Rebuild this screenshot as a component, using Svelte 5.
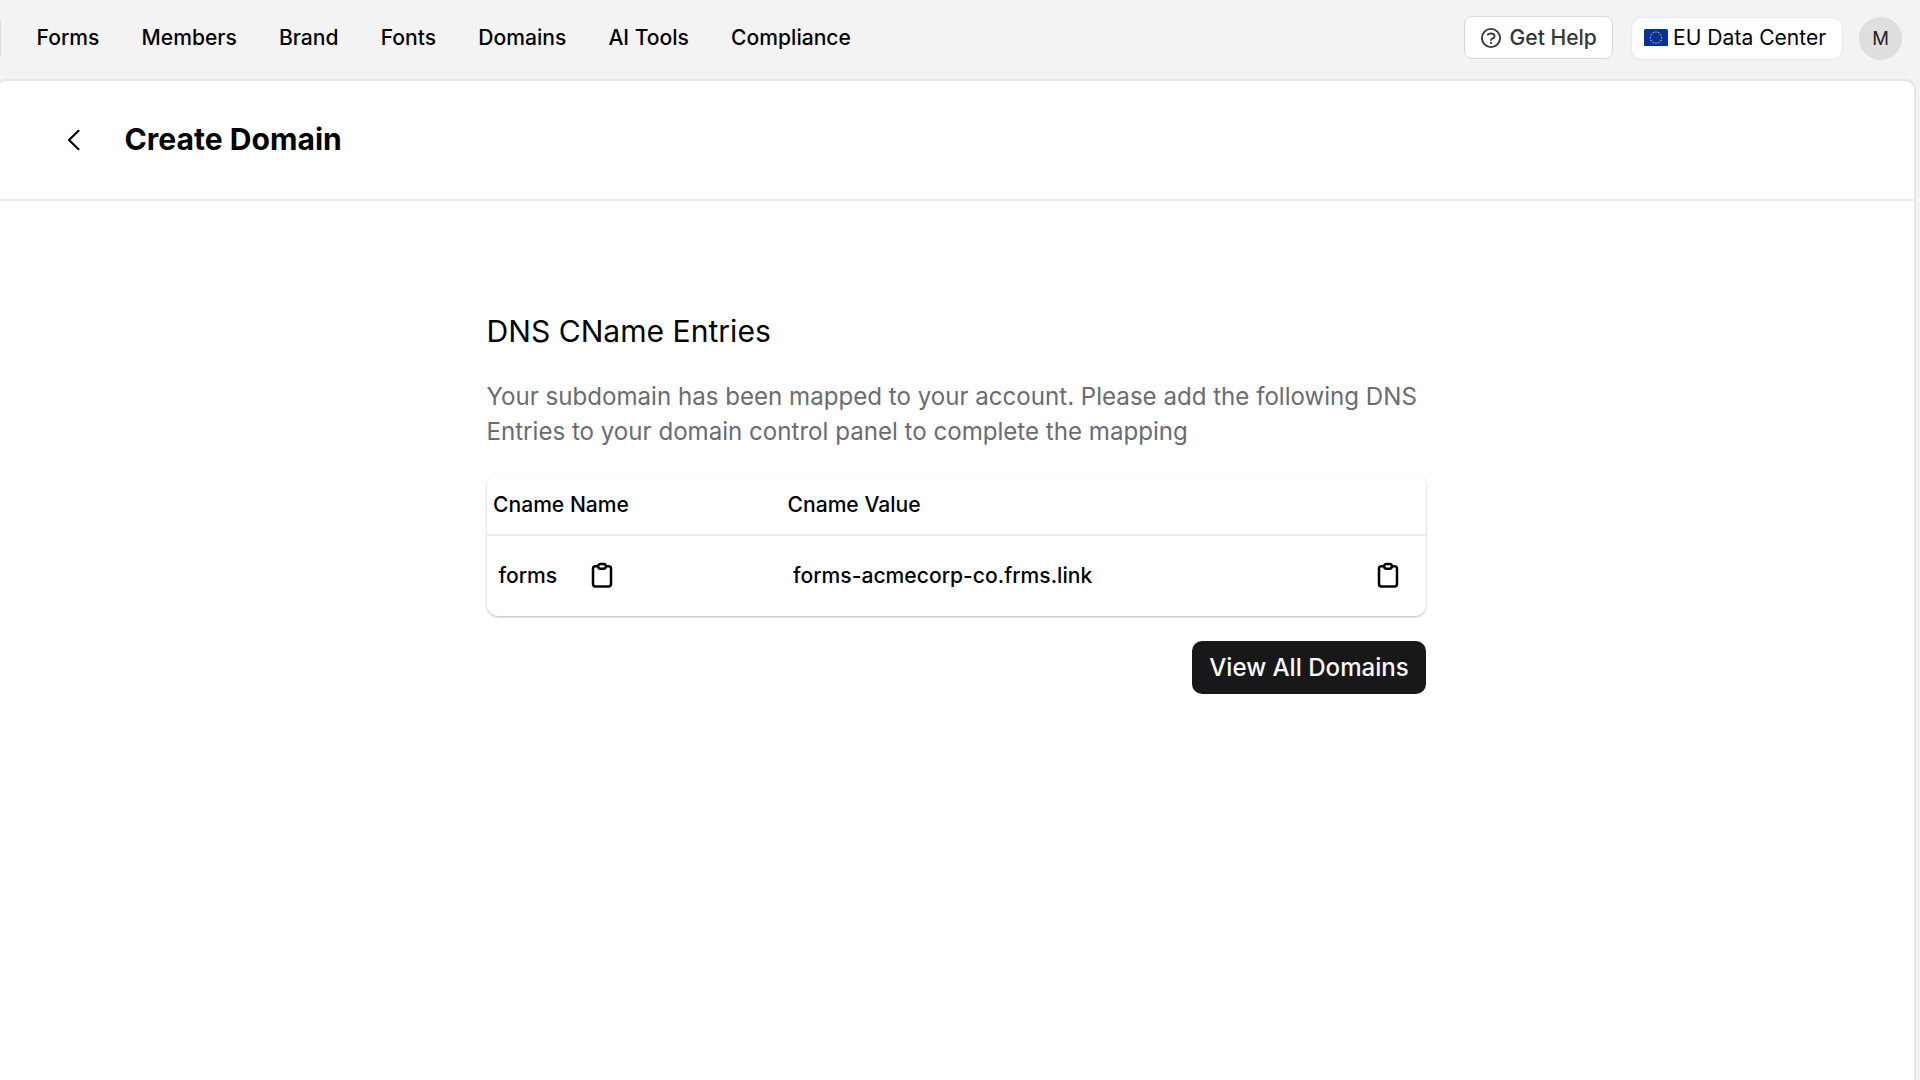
<script>
  const links = ["Forms", "Members", "Brand", "Fonts", "Domains", "AI Tools", "Compliance"]

  const record = { name: "forms", value: "forms-acmecorp-co.frms.link" }

  // centre points of the twelve flag stars
  const stars = Array.from({ length: 12 }, (_, i) => {
    const angle = (i * Math.PI) / 6
    return { x: 12 + 5.6 * Math.sin(angle), y: 8.7 - 5.6 * Math.cos(angle) }
  })

  function copy(text) {
    navigator.clipboard?.writeText(text)
  }
</script>

{#snippet clipboard()}
  <svg width="28" height="28" viewBox="0 0 28 28" fill="none" stroke="currentColor" stroke-width="2.5">
    <path d="M10.2 4.2H7.4a2.4 2.4 0 0 0-2.4 2.4v15.4a2.4 2.4 0 0 0 2.4 2.4h13.2a2.4 2.4 0 0 0 2.4-2.4V6.6a2.4 2.4 0 0 0-2.4-2.4h-2.8" />
    <rect x="10.2" y="1.9" width="7.6" height="4.8" rx="2.2" />
  </svg>
{/snippet}

<div class="app">
  <header class="topbar">
    <nav class="nav">
      {#each links as link}
        <a class="nav__link" href="#/">{link}</a>
      {/each}
    </nav>

    <div class="actions">
      <button type="button" class="help">
        <svg width="22" height="22" viewBox="0 0 22 22" fill="none" stroke="currentColor" stroke-width="1.9" stroke-linecap="round" stroke-linejoin="round">
          <circle cx="11" cy="11" r="9.1" />
          <path d="M7.8 7.6c1.5-1.4 4.4-1.6 5.9-.3 1.1 1 1.1 2.5.1 3.4-.9.8-2.8 1.1-2.8 2.4" />
          <path d="M11 15.9v.1" stroke-width="2.2" />
        </svg>
        <span>Get Help</span>
      </button>
      <div class="region">
        <svg width="24" height="17.4" viewBox="0 0 24 17.4">
          <rect width="24" height="17.4" rx="1.6" fill="#053299" />
          {#each stars as star}
            <circle cx={star.x} cy={star.y} r="0.75" fill="#d0b95a" />
          {/each}
        </svg>
        <span>EU Data Center</span>
      </div>
      <div class="avatar">M</div>
    </div>
  </header>

  <main class="panel">
    <div class="heading">
      <button type="button" class="back" aria-label="Back">
        <svg width="14" height="22" viewBox="0 0 14 22" fill="none" stroke="currentColor" stroke-width="2.2" stroke-linecap="round" stroke-linejoin="round">
          <path d="M11.5 1.8 2 11l9.5 9.2" />
        </svg>
      </button>
      <h1 class="title">Create Domain</h1>
    </div>

    <section class="content">
      <h2 class="subtitle">DNS CName Entries</h2>
      <p class="intro">
        Your subdomain has been mapped to your account. Please add the following DNS<br />
        Entries to your domain control panel to complete the mapping
      </p>

      <div class="card">
        <div class="row row--head">
          <div>Cname Name</div>
          <div>Cname Value</div>
        </div>
        <div class="row row--body">
          <div class="cell">
            <span>{record.name}</span>
            <button type="button" aria-label="Copy name" onclick={() => copy(record.name)}>
              {@render clipboard()}
            </button>
          </div>
          <div class="cell cell--value">
            <span>{record.value}</span>
            <button type="button" aria-label="Copy value" onclick={() => copy(record.value)}>
              {@render clipboard()}
            </button>
          </div>
        </div>
      </div>

      <button type="button" class="primary">View All Domains</button>
    </section>
  </main>
</div>

<style>
  :global(body) {
    background: #f3f3f3;
  }

  .app {
    width: 1920px;
    height: 1080px;
    overflow: hidden;
    display: flex;
    flex-direction: column;
    background: #f3f3f3;
    color: #030305;
    font-family: Inter, "Liberation Sans", sans-serif;
    font-size: 21.1px;
  }

  .app * {
    box-sizing: border-box;
  }

  button {
    padding: 0;
    border: none;
    background: none;
    color: inherit;
    font: inherit;
    cursor: pointer;
  }

  svg {
    display: block;
    flex: none;
  }

  .topbar {
    display: flex;
    flex: none;
    align-items: center;
    justify-content: space-between;
    height: 79px;
    padding: 0 18px 3px 0;
  }

  .nav {
    display: flex;
    align-items: center;
    gap: 42.1px;
    height: 37px;
    padding: 0 0 1px 35.5px;
    border-left: 1px solid #dcdcde;
  }

  .nav__link {
    color: inherit;
    font-weight: 500;
    text-decoration: none;
    white-space: nowrap;
  }

  .actions {
    display: flex;
    align-items: center;
    white-space: nowrap;
  }

  .help {
    display: flex;
    align-items: center;
    gap: 7.5px;
    width: 149px;
    height: 43px;
    margin: 0 18px 1px 0;
    padding-left: 15px;
    border: 1px solid #d9d9db;
    border-radius: 8px;
    background: #fff;
    color: #35353b;
    font-weight: 500;
  }

  .region {
    display: flex;
    align-items: center;
    gap: 5px;
    width: 212px;
    height: 43px;
    margin-right: 17px;
    padding: 0 0 1px 12px;
    border: 1px solid #e7e7ea;
    border-radius: 11px;
    background: #fff;
  }

  .region {
    margin-right: 16px;
  }

  .avatar {
    display: flex;
    align-items: center;
    justify-content: center;
    width: 43px;
    height: 43px;
    border-radius: 50%;
    background: #dedede;
    color: #222;
    font-size: 18.5px;
  }

  .panel {
    flex: 1;
    width: 1921px;
    margin-left: -5px;
    border: 2px solid #e6e6ea;
    border-bottom: none;
    border-radius: 11px 11px 0 0;
    background: #fff;
  }

  .heading {
    display: flex;
    align-items: center;
    gap: 44px;
    height: 120px;
    padding: 0 0 1px 69.5px;
    border-bottom: 2px solid #ebebed;
  }

  .title {
    margin: 0;
    padding-bottom: 2px;
    font-size: 30.1px;
    font-weight: 700;
    line-height: 36px;
  }

  .content {
    display: flex;
    flex-direction: column;
    width: 939.5px;
    margin: 112px 0 0 489.5px;
  }

  .subtitle {
    margin: 0;
    font-size: 30.1px;
    font-weight: 400;
    line-height: 36px;
  }

  .intro {
    margin: 30px 0 0;
    color: #6b6b73;
    font-size: 24.1px;
    line-height: 35px;
    white-space: nowrap;
  }

  .card {
    margin-top: 25px;
    border-radius: 11px;
    background: #fff;
    box-shadow: 0 1px 3px rgba(0, 0, 0, 0.12), 0 1px 2px rgba(0, 0, 0, 0.16);
    font-weight: 500;
  }

  .row {
    display: grid;
    grid-template-columns: 294.5px 1fr;
    align-items: center;
  }

  .row--head {
    height: 62px;
    padding-left: 6.5px;
    border-bottom: 2px solid #ebebed;
  }

  .row--body {
    height: 80px;
    padding: 0 0 1px 12px;
  }

  .cell {
    display: flex;
    align-items: center;
    gap: 30.5px;
  }

  .cell--value {
    justify-content: space-between;
    padding-right: 24px;
  }

  .primary {
    align-self: flex-end;
    width: 234px;
    height: 53px;
    margin-top: 25px;
    border-radius: 10px;
    background: #18181b;
    color: #fafafa;
    font-size: 24.1px;
    font-weight: 500;
  }
</style>
